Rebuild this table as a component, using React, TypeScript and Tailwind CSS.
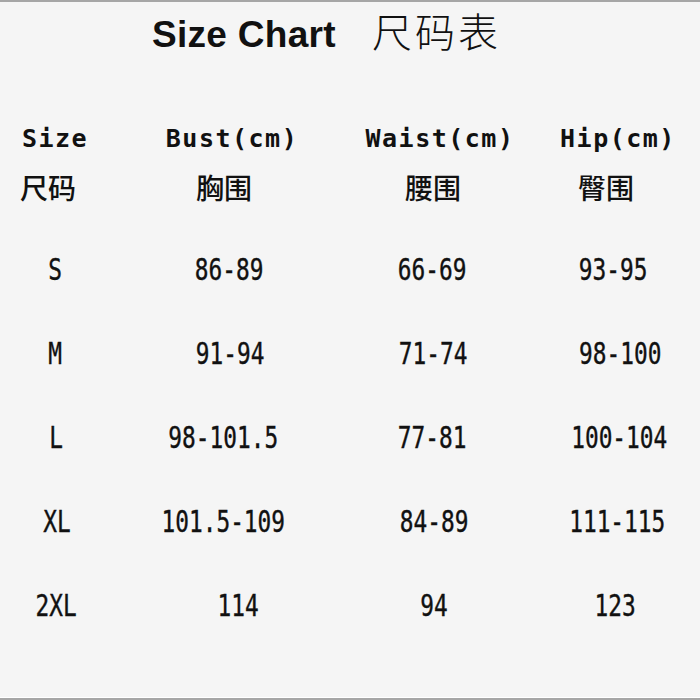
type Cell = { text: string; pad?: string };

const headEn: Cell[] = [
  { text: "Size" },
  { text: "Bust(cm)", pad: "pl-[4px]" },
  { text: "Waist(cm)", pad: "pl-[12px]" },
  { text: "Hip(cm)", pad: "pl-[18px]" },
];

const headZh: Cell[] = [
  { text: "尺码", pad: "pr-[14px]" },
  { text: "胸围", pad: "pr-[12px]" },
  { text: "腰围", pad: "pr-[2px]" },
  { text: "臀围", pad: "pr-[6px]" },
];

const rows: Cell[][] = [
  [{ text: "S" }, { text: "86-89", pad: "pr-[2px]" }, { text: "66-69", pad: "pr-[4px]" }, { text: "93-95", pad: "pl-[8px]" }],
  [{ text: "M" }, { text: "91-94" }, { text: "71-74", pad: "pr-[2px]" }, { text: "98-100", pad: "pl-[22px]" }],
  [{ text: "L", pad: "pl-[2px]" }, { text: "98-101.5", pad: "pr-[14px]" }, { text: "77-81", pad: "pr-[4px]" }, { text: "100-104", pad: "pl-[20px]" }],
  [{ text: "XL", pad: "pl-[4px]" }, { text: "101.5-109", pad: "pr-[14px]" }, { text: "84-89" }, { text: "111-115", pad: "pl-[16px]" }],
  [{ text: "2XL", pad: "pl-[2px]" }, { text: "114", pad: "pl-[16px]" }, { text: "94" }, { text: "123", pad: "pl-[12px]" }],
];

const grid = "grid grid-cols-[110px_240px_168px_1fr]";

export default function App() {
  return (
    <div className="w-[700px] h-[700px] bg-[#f5f5f5] border-t-2 border-b-2 border-[#a6a6a6] flex flex-col text-[#111]">
      {/* Title */}
      <div className="pt-[6px] pl-[152px] flex items-baseline gap-[36px] h-[51px] leading-[44px]">
        <span className="font-['Liberation_Sans',Arial,sans-serif] font-bold text-[37px] tracking-[0.3px]">Size Chart</span>
        <span className="font-['Noto_Sans_CJK_SC',sans-serif] font-extralight text-[40px] tracking-[3px]">尺码表</span>
      </div>

      {/* Headers */}
      <div className={`${grid} mt-[62px] h-[48px] items-center font-['DejaVu_Sans_Mono',monospace] font-bold text-[25px] tracking-[1.5px]`}>
        {headEn.map((c, i) => (
          <div key={i} className={`text-center ${c.pad ?? ""}`}>{c.text}</div>
        ))}
      </div>
      <div className={`${grid} h-[48px] items-center font-['Noto_Sans_CJK_SC',sans-serif] font-medium text-[28px] leading-none`}>
        {headZh.map((c, i) => (
          <div key={i} className={`text-center ${c.pad ?? ""}`}>{c.text}</div>
        ))}
      </div>

      {/* Size rows */}
      <div className="mt-[17px] flex flex-col">
        {rows.map((r, ri) => (
          <div key={ri} className={`${grid} h-[84px] items-center font-['DejaVu_Sans_Mono',monospace] text-[30px] leading-none [-webkit-text-stroke:0.4px_#111]`}>
            {r.map((c, i) => (
              <div key={i} className={`text-center ${c.pad ?? ""}`}>
                <span className="inline-block scale-x-[0.76]">{c.text}</span>
              </div>
            ))}
          </div>
        ))}
      </div>

      <div className="mt-auto h-px bg-white" />
    </div>
  );
}
